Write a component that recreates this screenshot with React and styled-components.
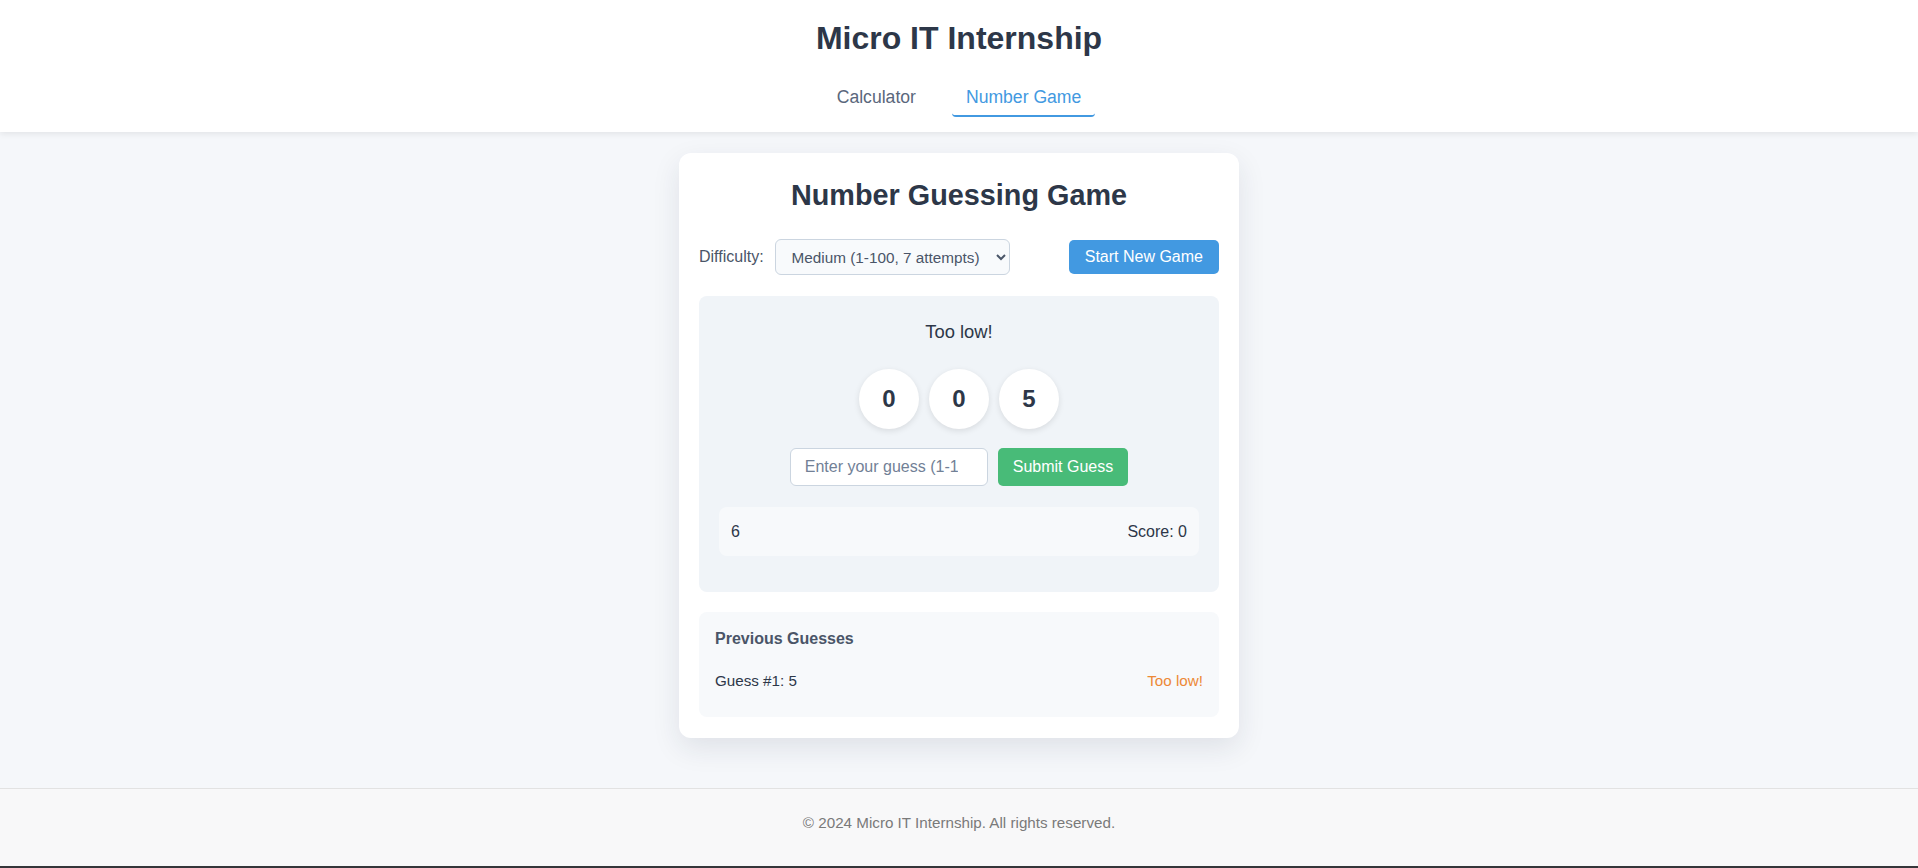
import React, { useState } from "react";
import styled, { createGlobalStyle } from "styled-components";

const GlobalStyle = createGlobalStyle`
  * {
    box-sizing: border-box;
  }
  body {
    margin: 0;
    background: #f5f7fa;
    font-family: "Liberation Sans", Arial, sans-serif;
    color: #2d3748;
  }
`;

const Page = styled.div`
  min-height: 100vh;
  display: flex;
  flex-direction: column;
`;

const Header = styled.header`
  background: #ffffff;
  box-shadow: 0 2px 6px rgba(0, 0, 0, 0.08);
  padding: 20px 0 15px;
  display: flex;
  flex-direction: column;
  align-items: center;
  position: relative;
  z-index: 1;
`;

const SiteTitle = styled.h1`
  margin: 0 0 22px;
  font-size: 32px;
  line-height: 37px;
  font-weight: 700;
  color: #2d3748;
`;

const Nav = styled.nav`
  display: flex;
  gap: 22px;
`;

const Tab = styled.button`
  font-family: inherit;
  font-size: 17.6px;
  line-height: 20px;
  padding: 8px 14px;
  background: none;
  border: none;
  border-bottom: 2px solid ${(props) => (props.$active ? "#4299e1" : "transparent")};
  border-radius: 4px;
  color: ${(props) => (props.$active ? "#4299e1" : "#5a677c")};
  cursor: pointer;
`;

const Main = styled.main`
  flex: 1;
  padding: 21px 20px;
  display: flex;
  justify-content: center;
  align-items: flex-start;
`;

const Card = styled.div`
  width: 560px;
  background: #ffffff;
  border-radius: 12px;
  box-shadow: 0 10px 28px rgba(30, 40, 70, 0.1);
  padding: 26px 20px 21px;
`;

const CardTitle = styled.h2`
  margin: 0 0 27px;
  text-align: center;
  font-size: 28.8px;
  line-height: 33px;
  font-weight: 700;
  color: #2d3748;
`;

const Controls = styled.div`
  display: flex;
  justify-content: space-between;
  align-items: center;
  margin-bottom: 21px;
`;

const Field = styled.label`
  display: flex;
  align-items: center;
  gap: 11px;
  font-size: 16px;
  color: #4a5568;
`;

const Select = styled.select`
  width: 235px;
  height: 36px;
  padding: 0 10px 0 12px;
  font-family: inherit;
  font-size: 15.3px;
  color: #4a5568;
  background: #f8fafc;
  border: 1px solid #cbd5e0;
  border-radius: 6px;
`;

const Button = styled.button`
  height: ${(props) => props.$height || 34}px;
  padding: 0 ${(props) => props.$pad || 16}px;
  font-family: inherit;
  font-size: 16px;
  color: #ffffff;
  background: ${(props) => props.$color};
  border: none;
  border-radius: 5px;
  cursor: pointer;
`;

const GamePanel = styled.div`
  background: #f0f4f8;
  border-radius: 8px;
  padding: 25px 20px 36px;
  margin-bottom: 20px;
`;

const Message = styled.div`
  text-align: center;
  font-size: 18.4px;
  line-height: 21px;
  color: #2d3748;
  margin-bottom: 27px;
`;

const Digits = styled.div`
  display: flex;
  justify-content: center;
  gap: 10px;
  margin-bottom: 19px;
`;

const Digit = styled.div`
  width: 60px;
  height: 60px;
  border-radius: 50%;
  background: #ffffff;
  box-shadow: 0 2px 6px rgba(0, 0, 0, 0.1);
  display: flex;
  align-items: center;
  justify-content: center;
  font-size: 24px;
  font-weight: 700;
  color: #2d3748;
`;

const GuessForm = styled.div`
  display: flex;
  justify-content: center;
  gap: 10px;
  margin-bottom: 21px;
`;

const GuessInput = styled.input`
  width: 198px;
  height: 38px;
  padding: 0 14px;
  font-family: inherit;
  font-size: 16px;
  color: #2d3748;
  background: #ffffff;
  border: 1px solid #cbd5e0;
  border-radius: 6px;
  &::placeholder {
    color: #718096;
  }
`;

const StatsBar = styled.div`
  display: flex;
  justify-content: space-between;
  align-items: center;
  background: #f7f9fb;
  border-radius: 8px;
  padding: 15px 12px;
  font-size: 16px;
  line-height: 19px;
  color: #2d3748;
`;

const History = styled.div`
  background: #f7f9fb;
  border-radius: 8px;
  padding: 18px 16px 19px;
`;

const HistoryTitle = styled.h3`
  margin: 0 0 16px;
  font-size: 16px;
  line-height: 18px;
  font-weight: 700;
  color: #4a5568;
`;

const HistoryRow = styled.div`
  display: flex;
  justify-content: space-between;
  align-items: center;
  padding: 8px 0;
  font-size: 15.2px;
  line-height: 18px;
  color: #2d3748;
`;

const Result = styled.span`
  color: ${(props) => props.$color};
`;

const Footer = styled.footer`
  background: #f8f8f9;
  border-top: 1px solid #e2e2e2;
  border-bottom: 2px solid #35363a;
  padding: 24px 0 33px;
  text-align: center;
  font-size: 15.2px;
  line-height: 20px;
  color: #7a7a7a;
`;

export default function App() {
  const [tab, setTab] = useState("game");
  const guesses = [{ value: 5, hint: "Too low!" }];

  return (
    <Page>
      <GlobalStyle />
      <Header>
        <SiteTitle>Micro IT Internship</SiteTitle>
        <Nav>
          <Tab $active={tab === "calc"} onClick={() => setTab("calc")}>
            Calculator
          </Tab>
          <Tab $active={tab === "game"} onClick={() => setTab("game")}>
            Number Game
          </Tab>
        </Nav>
      </Header>
      <Main>
        <Card>
          <CardTitle>Number Guessing Game</CardTitle>
          <Controls>
            <Field>
              Difficulty:
              <Select defaultValue="medium">
                <option value="easy">Easy (1-50, 10 attempts)</option>
                <option value="medium">Medium (1-100, 7 attempts)</option>
                <option value="hard">Hard (1-200, 5 attempts)</option>
              </Select>
            </Field>
            <Button $color="#4299e1">Start New Game</Button>
          </Controls>

          <GamePanel>
            <Message>Too low!</Message>
            <Digits>
              {["0", "0", "5"].map((d, i) => (
                <Digit key={i}>{d}</Digit>
              ))}
            </Digits>
            <GuessForm>
              <GuessInput type="number" placeholder="Enter your guess (1-100)" />
              <Button $color="#48bb78" $height={38} $pad={15}>
                Submit Guess
              </Button>
            </GuessForm>
            <StatsBar>
              <span>6</span>
              <span>Score: 0</span>
            </StatsBar>
          </GamePanel>

          <History>
            <HistoryTitle>Previous Guesses</HistoryTitle>
            {guesses.map((g, i) => (
              <HistoryRow key={i}>
                <span>
                  Guess #{i + 1}: {g.value}
                </span>
                <Result $color="#ed8936">{g.hint}</Result>
              </HistoryRow>
            ))}
          </History>
        </Card>
      </Main>
      <Footer>© 2024 Micro IT Internship. All rights reserved.</Footer>
    </Page>
  );
}
